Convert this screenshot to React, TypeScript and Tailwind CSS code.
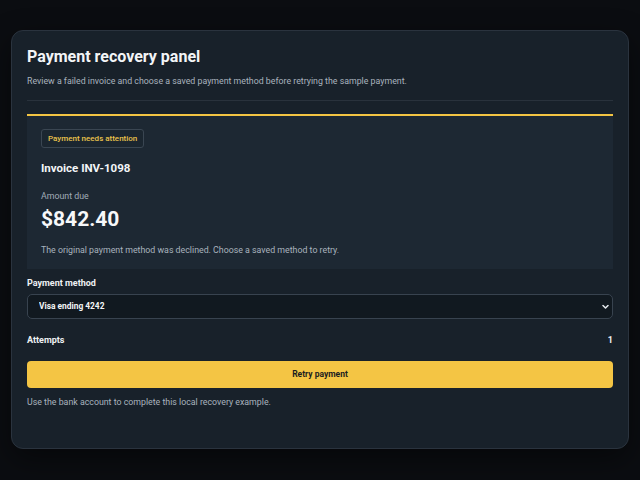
import { useState } from 'react';

// Recovery panel for a declined invoice

const methods = ['Visa ending 4242', 'Mastercard ending 8810', 'Bank account ending 0137'];

function ChevronDown() {
  return (
    <svg width="7" height="5" viewBox="0 0 7 5" fill="none" className="pointer-events-none absolute right-[4px] top-1/2 -translate-y-1/2">
      <path d="M1 1l2.5 2.5L6 1" stroke="#e5e9ee" strokeWidth="1.5" strokeLinecap="round" strokeLinejoin="round" />
    </svg>
  );
}

export default function App() {
  const [method, setMethod] = useState(methods[0]);
  const [attempts, setAttempts] = useState(1);

  return (
    <div className="min-h-screen bg-[#0b0d11] pt-[30px] px-[11px] font-['Roboto',sans-serif]">
      <div className="h-[419px] rounded-[12px] border border-[#2a333e] bg-[#18212a] px-[15px] pt-[16px] shadow-[0_10px_30px_rgba(0,0,0,0.45)]">
        <h1 className="text-[16px] leading-[20px] font-bold text-[#f3f5f7]">Payment recovery panel</h1>
        <p className="mt-[8px] text-[8.8px] leading-[12px] text-[#a9b3be]">
          Review a failed invoice and choose a saved payment method before retrying the sample payment.
        </p>
        <div className="mt-[13px] border-t border-[#29323c]" />

        <section className="mt-[13px] border-t-2 border-[#f2c443] bg-[#1d2833] px-[14px] pt-[13px] pb-[13px]">
          <div className="flex h-[19px] w-fit items-center rounded-[3px] border border-[#3a4652] bg-[#1b2630] px-[6px] text-[8px] font-medium text-[#eac34c]">
            Payment needs attention
          </div>
          <h2 className="mt-[13px] text-[11.5px] leading-[14px] font-bold text-[#f3f5f7]">Invoice INV-1098</h2>
          <div className="mt-[15px] text-[8.8px] leading-[12px] text-[#a2adb8]">Amount due</div>
          <div className="mt-[4px] text-[21px] leading-[26px] font-bold text-[#f7f8fa]">$842.40</div>
          <p className="mt-[12px] text-[8.8px] leading-[12px] text-[#a9b3be]">
            The original payment method was declined. Choose a saved method to retry.
          </p>
        </section>

        <label className="mt-[8px] block text-[9px] leading-[12px] font-bold text-[#eef1f4]">Payment method</label>
        <div className="relative mt-[5px]">
          <select
            value={method}
            onChange={(e) => setMethod(e.target.value)}
            className="block h-[25px] w-full appearance-none rounded-[5px] border border-[#38434f] bg-[#111920] pl-[11px] text-[8.4px] font-bold text-[#f3f5f7] outline-none"
          >
            {methods.map((m) => (
              <option key={m}>{m}</option>
            ))}
          </select>
          <ChevronDown />
        </div>

        <div className="mt-[15px] flex items-center justify-between text-[9px] leading-[12px] font-bold text-[#eef1f4]">
          <span>Attempts</span>
          <span>{attempts}</span>
        </div>

        <button
          type="button"
          onClick={() => setAttempts((n) => n + 1)}
          className="mt-[15px] flex h-[27px] w-full items-center justify-center rounded-[4px] bg-[#f4c544] text-[8.5px] font-bold text-[#1b1d20]"
        >
          Retry payment
        </button>

        <p className="mt-[8px] text-[8.8px] leading-[12px] text-[#a9b3be]">
          Use the bank account to complete this local recovery example.
        </p>
      </div>
    </div>
  );
}
